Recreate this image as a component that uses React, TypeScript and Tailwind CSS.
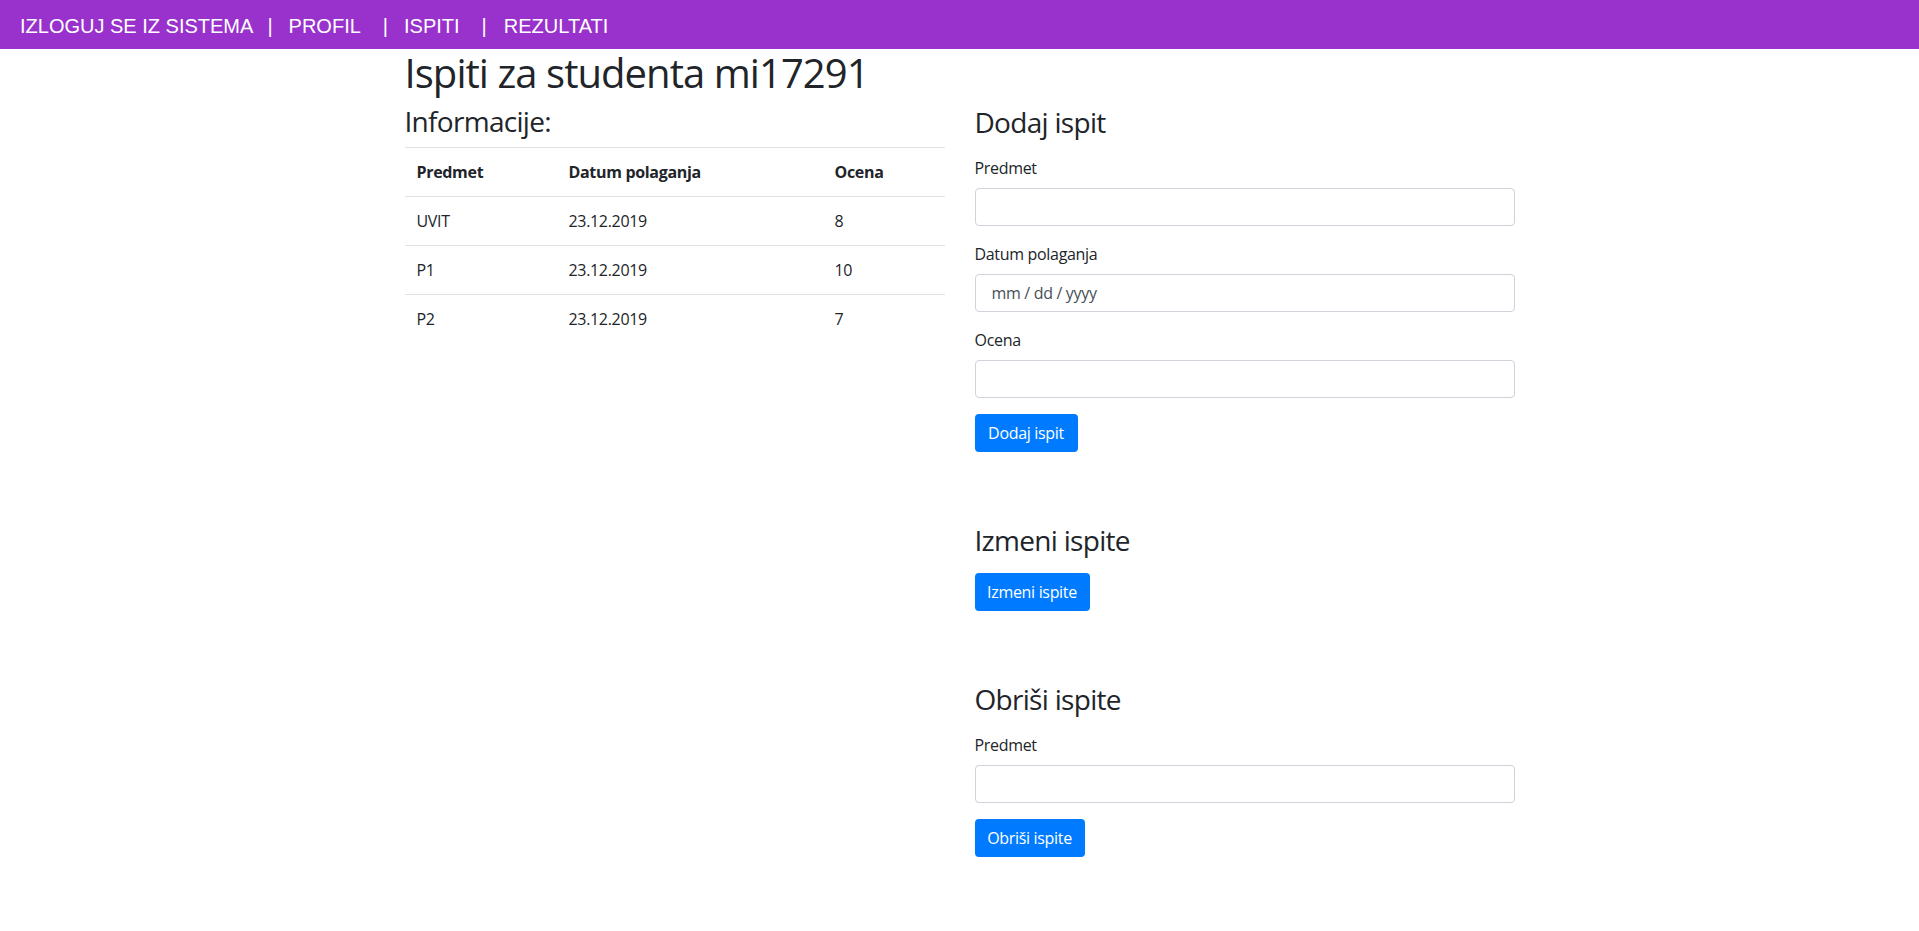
import React from 'react';

const exams = [
  { subject: 'UVIT', date: '23.12.2019', grade: '8' },
  { subject: 'P1', date: '23.12.2019', grade: '10' },
  { subject: 'P2', date: '23.12.2019', grade: '7' },
];

function Field({ label, placeholder }: { label: string; placeholder?: string }) {
  return (
    <div className="mb-4">
      <label className="block mb-2 leading-6">{label}</label>
      <input
        type="text"
        placeholder={placeholder}
        className={`block w-full h-[38px] ${placeholder ? 'pl-4' : 'px-3'} border border-[#ced4da] rounded-[4px] text-[#495057] placeholder:text-[#495057] outline-none`}
      />
    </div>
  );
}

function Btn({ children, w }: { children: React.ReactNode; w: string }) {
  return (
    <button className={`h-[38px] ${w} bg-[#007bff] text-white rounded-[4px] leading-6 text-center`}>
      {children}
    </button>
  );
}

export default function App() {
  return (
    <div className="min-h-screen bg-white text-[#212529] font-['Open_Sans',sans-serif] text-base tracking-[-0.32px]">
      <nav className="h-[49px] bg-[#9932cc] text-white font-['Liberation_Sans',Arial,sans-serif] text-[20px] leading-[23px] pt-[15px] flex tracking-normal">
        <a className="ml-[20px]">IZLOGUJ SE IZ SISTEMA</a>
        <span className="ml-[14px]">|</span>
        <a className="ml-[16px]">PROFIL</a>
        <span className="ml-[22px]">|</span>
        <a className="ml-[16px]">ISPITI</a>
        <span className="ml-[22px]">|</span>
        <a className="ml-[17px]">REZULTATI</a>
      </nav>

      <div className="w-[1140px] mx-auto px-[15px]">
        <h1 className="text-[40px] leading-[48px] mb-2 tracking-[-0.94px]">Ispiti za studenta mi17291</h1>
        <div className="flex -mx-[15px]">
          <div className="w-1/2 px-[15px]">
            <h3 className="text-[28px] leading-[33.6px] mb-2 tracking-[-0.7px]">Informacije:</h3>
            <table className="w-full border-collapse">
              <thead>
                <tr className="border-t border-[#dee2e6]">
                  <th className="w-[152px] p-3 text-left font-bold leading-6">Predmet</th>
                  <th className="w-[266px] p-3 text-left font-bold leading-6">Datum polaganja</th>
                  <th className="p-3 text-left font-bold leading-6">Ocena</th>
                </tr>
              </thead>
              <tbody>
                {exams.map((e) => (
                  <tr key={e.subject} className="border-t border-[#dee2e6]">
                    <td className="p-3 leading-6">{e.subject}</td>
                    <td className="p-3 leading-6">{e.date}</td>
                    <td className="p-3 leading-6">{e.grade}</td>
                  </tr>
                ))}
              </tbody>
            </table>
          </div>

          <div className="w-1/2 px-[15px] pt-[1px]">
            <h3 className="text-[28px] leading-[33.6px] mb-4 tracking-[-0.7px]">Dodaj ispit</h3>
            <Field label="Predmet" />
            <Field label="Datum polaganja" placeholder="mm / dd / yyyy" />
            <Field label="Ocena" />
            <Btn w="w-[103px]">Dodaj ispit</Btn>

            <h3 className="text-[28px] leading-[33.6px] mb-4 mt-[72px] tracking-[-0.7px]">Izmeni ispite</h3>
            <Btn w="w-[115px]">Izmeni ispite</Btn>

            <h3 className="text-[28px] leading-[33.6px] mb-4 mt-[72px] tracking-[-0.7px]">Obriši ispite</h3>
            <Field label="Predmet" />
            <Btn w="w-[110px]">Obriši ispite</Btn>
          </div>
        </div>
      </div>
    </div>
  );
}
